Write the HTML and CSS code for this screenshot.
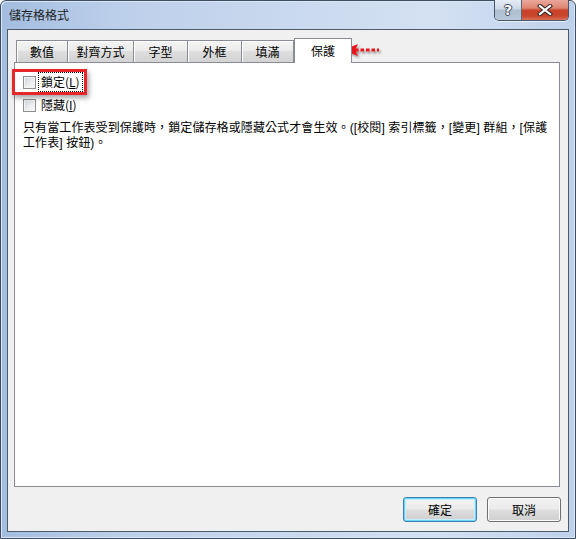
FILE: index.html
```html
<!DOCTYPE html>
<html lang="zh-Hant">
<head>
<meta charset="utf-8">
<title>儲存格格式</title>
<link rel="stylesheet" href="styles.css">
</head>
<body>
<div class="window">
  <div class="titlebar">
    <span class="title">儲存格格式</span>
    <div class="caption-btns">
      <span class="cap-help">?</span>
      <span class="cap-close">
        <svg width="16" height="12" viewBox="0 0 16 12">
          <path d="M3 2 L13 10 M13 2 L3 10" stroke="#3b2a2a" stroke-width="4.2" stroke-linecap="square" fill="none"/>
          <path d="M3 2 L13 10 M13 2 L3 10" stroke="#ffffff" stroke-width="2.2" stroke-linecap="square" fill="none"/>
        </svg>
      </span>
    </div>
  </div>
  <div class="client">
    <div class="tabs">
      <div class="tab t1">數值</div>
      <div class="tab t2">對齊方式</div>
      <div class="tab t3">字型</div>
      <div class="tab t4">外框</div>
      <div class="tab t5">填滿</div>
      <div class="tab selected">保護</div>
    </div>
    <div class="panel">
      <div class="row row-first">
        <span class="checkbox"></span>
        <span class="label focused">鎖定(<u>L</u>)</span>
      </div>
      <div class="row">
        <span class="checkbox"></span>
        <span class="label">隱藏(<u>I</u>)</span>
      </div>
      <p class="desc">只有當工作表受到保護時，鎖定儲存格或隱藏公式才會生效。([校閱] 索引標籤，[變更] 群組，[保護<br>工作表] 按鈕)。</p>
    </div>
    <div class="footer">
      <button class="btn default">確定</button>
      <button class="btn">取消</button>
    </div>
  </div>
  <div class="highlight"></div>
  <svg class="arrow" width="44" height="20" viewBox="0 0 44 20">
    <defs>
      <filter id="sh" x="-20%" y="-40%" width="150%" height="200%">
        <feDropShadow dx="1.5" dy="2" stdDeviation="1.2" flood-color="#000" flood-opacity="0.4"/>
      </filter>
    </defs>
    <g filter="url(#sh)">
      <path d="M1 8 L16 2 L13 8 L16 14 Z" fill="#e8161b"/>
      <path d="M13 8 L37 8" stroke="#e8161b" stroke-width="3.2" stroke-dasharray="3.5 2" fill="none"/>
    </g>
  </svg>
</div>
</body>
</html>
```

FILE: styles.css
```css
* {
  box-sizing: border-box;
}

html, body {
  margin: 0;
  padding: 0;
}

body {
  width: 576px;
  height: 539px;
  overflow: hidden;
  font-family: "Liberation Sans", "Noto Sans CJK TC", sans-serif;
  font-size: 12px;
  color: #000;
  background: #ffffff;
}

.window {
  position: relative;
  width: 576px;
  height: 539px;
  border: 1px solid #3f4f63;
  border-radius: 6px 6px 0 0;
  padding: 0 6px 6px 6px;
  display: flex;
  flex-direction: column;
  background: linear-gradient(to right, #a3bde0 0%, #bccfea 20%, #cbdaef 55%, #d4e1f3 75%, #bed1eb 100%);
  box-shadow: inset 1px 1px 0 #dbe6f5, inset -1px -1px 0 #dbe6f5;
}

.titlebar {
  height: 28px;
  flex: none;
  display: flex;
  justify-content: space-between;
  align-items: flex-start;
}

.title {
  padding-left: 2px;
  line-height: 27px;
  font-family: "Noto Sans CJK TC", sans-serif;
  font-size: 12px;
  color: #1e1e1e;
}

.caption-btns {
  display: flex;
  margin-top: -1px;
  border: 1px solid #4a5568;
  border-top: none;
  border-radius: 0 0 5px 5px;
  overflow: hidden;
  height: 21px;
  box-shadow: 0 1px 0 rgba(255, 255, 255, 0.6);
}

.cap-help {
  width: 27px;
  height: 20px;
  display: flex;
  align-items: center;
  justify-content: center;
  background: linear-gradient(to bottom, #e6edf6 0%, #cdd8e6 45%, #aebdd0 50%, #b8c7d9 100%);
  border-right: 1px solid #5b6677;
  font-family: "DejaVu Sans", sans-serif;
  font-weight: bold;
  font-size: 14px;
  color: #ffffff;
  text-shadow: 1px 0 0 #3b4656, -1px 0 0 #3b4656, 0 1px 0 #3b4656, 0 -1px 0 #3b4656;
}

.cap-close {
  width: 46px;
  height: 20px;
  display: flex;
  align-items: center;
  justify-content: center;
  background: linear-gradient(to bottom, #eaa99b 0%, #de8571 40%, #c94329 52%, #c9452c 80%, #d9735a 100%);
}

.client {
  flex: 1;
  display: flex;
  flex-direction: column;
  background: #f0f0f0;
  border: 1px solid #4d5a6b;
}

.tabs {
  display: flex;
  align-items: flex-end;
  height: 24px;
  margin-top: 8px;
  padding-left: 8px;
  position: relative;
  z-index: 1;
}

.tab {
  height: 22px;
  border: 1px solid #898c95;
  border-bottom: none;
  background: linear-gradient(to bottom, #f4f4f4 0%, #ebebeb 45%, #dedede 50%, #d3d3d3 100%);
  display: flex;
  align-items: center;
  justify-content: center;
  font-family: "Noto Sans CJK TC", sans-serif;
  font-size: 12px;
  box-shadow: inset 1px 1px 0 #ffffff;
  margin-right: -1px;
}

.t1 { width: 52px; }
.t2 { width: 67px; }
.t3 { width: 55px; }
.t4 { width: 55px; }
.t5 { width: 53px; margin-right: 0; }

.tab.selected {
  width: 58px;
  height: 25px;
  margin-bottom: -1px;
  background: #ffffff;
  box-shadow: none;
  padding-bottom: 2px;
}

.panel {
  width: 546px;
  height: 425px;
  margin-left: 6px;
  border: 1px solid #898c95;
  background: #ffffff;
  padding: 0 8px;
}

.row {
  display: flex;
  align-items: center;
  height: 20px;
  margin-top: 3px;
}

.row-first {
  margin-top: 9px;
}

.checkbox {
  width: 13px;
  height: 13px;
  border: 1px solid #8e8f8f;
  background: linear-gradient(135deg, #cfd3d8 0%, #eceef0 60%, #fafafa 100%);
  box-shadow: inset 0 0 0 1px #f4f4f4;
  flex: none;
}

.label {
  margin-left: 2px;
  padding: 0 2px;
  height: 20px;
  line-height: 18px;
  border: 1px solid transparent;
  font-family: "Noto Sans CJK TC", sans-serif;
}

.label.focused {
  border: 1px dotted #000;
}

.label u {
  text-decoration: underline;
  text-underline-offset: 1px;
}

.desc {
  margin: 6px 0 0 0;
  line-height: 15px;
  font-size: 12px;
  letter-spacing: 0.1px;
}

.footer {
  display: flex;
  justify-content: flex-end;
  gap: 10px;
  margin-top: 10px;
  padding-right: 7px;
}

.btn {
  width: 74px;
  height: 25px;
  margin: 0;
  padding: 0;
  border: 1px solid #707070;
  border-radius: 3px;
  background: linear-gradient(to bottom, #f2f2f2 0%, #ebebeb 48%, #dddddd 52%, #cfcfcf 100%);
  box-shadow: inset 0 0 0 1px #fbfbfb;
  font-family: "Noto Sans CJK TC", sans-serif;
  font-size: 12px;
  color: #000;
}

.btn.default {
  border-color: #3c7fb1;
  box-shadow: inset 0 0 0 1px #6ad6f7, inset 0 0 0 2px #c4eefb;
}

.highlight {
  position: absolute;
  left: 11px;
  top: 68px;
  width: 75px;
  height: 26px;
  border: 3px solid #e5262b;
  box-shadow: 2px 3px 5px rgba(0, 0, 0, 0.35);
}

.arrow {
  position: absolute;
  left: 341px;
  top: 41px;
}
```
